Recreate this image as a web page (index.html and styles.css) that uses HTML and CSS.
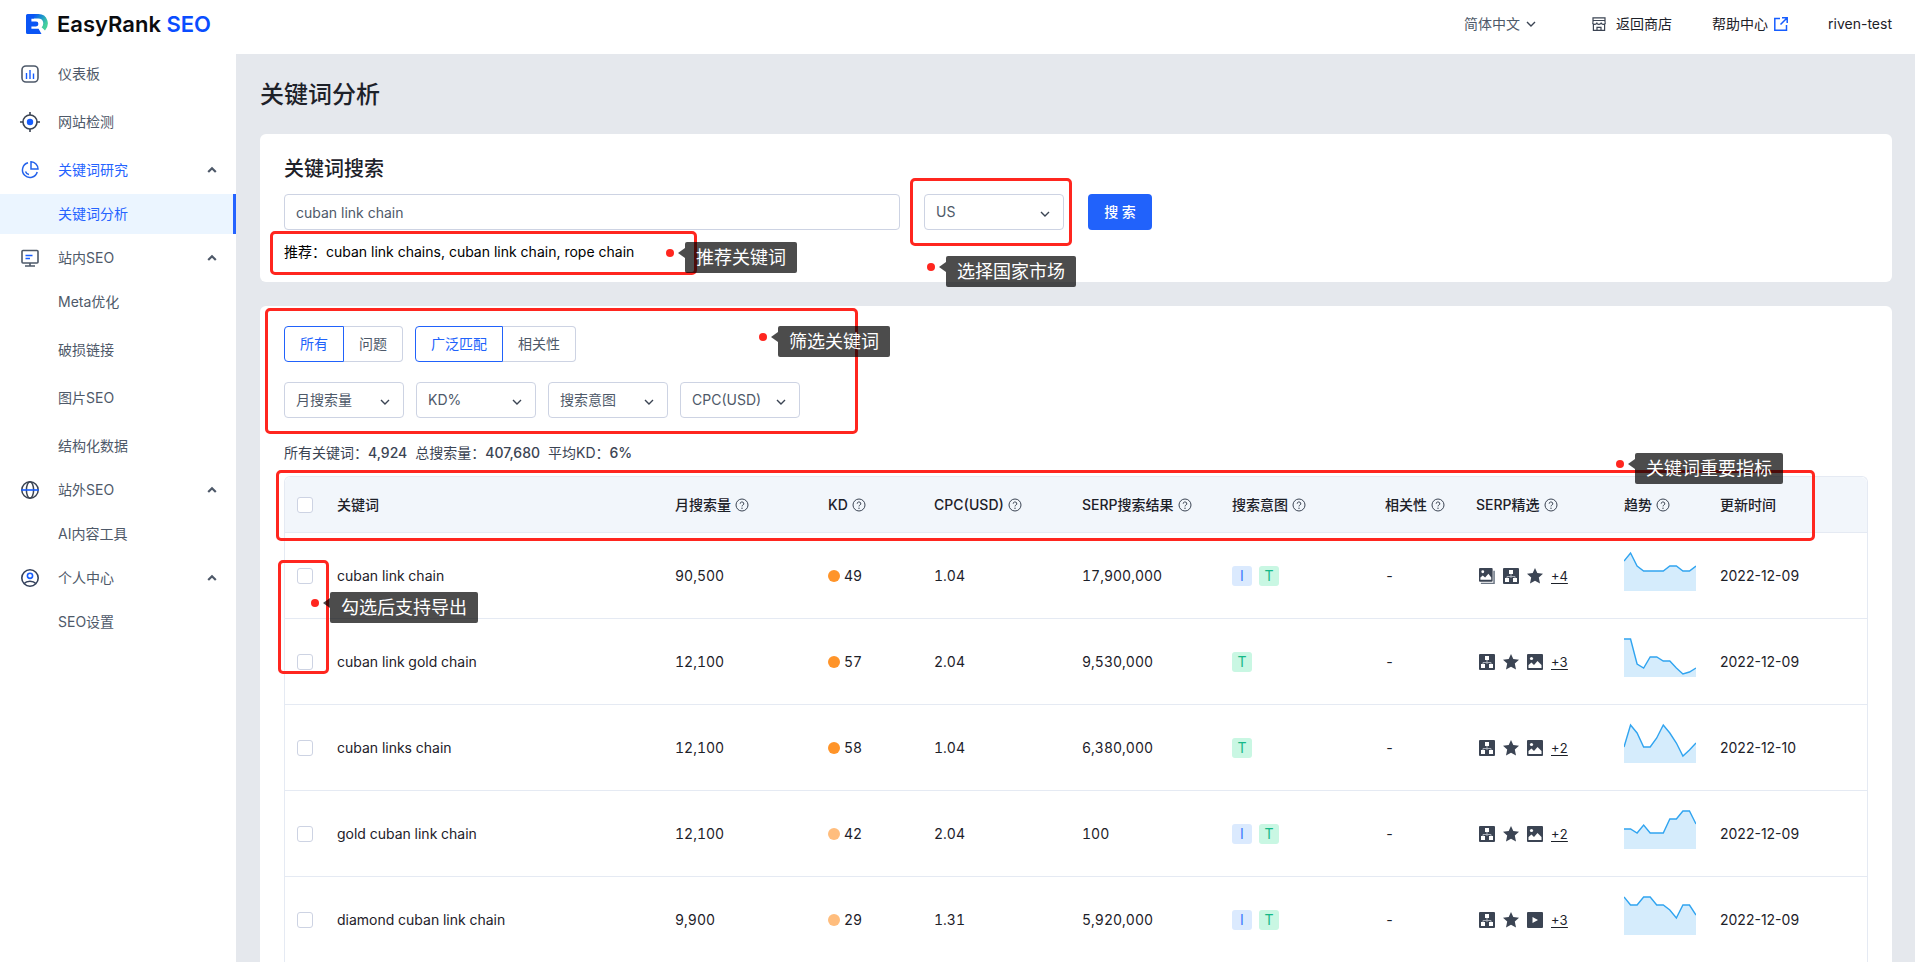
FILE: index.html
```html
<!DOCTYPE html>
<html lang="zh-CN">
<head>
<meta charset="utf-8">
<meta name="viewport" content="width=device-width, initial-scale=1">
<title>关键词分析 - EasyRank SEO</title>
<link rel="stylesheet" href="styles.css">
</head>
<body>
<svg class="sprite" aria-hidden="true">
  <symbol id="down" viewBox="0 0 10 10"><path d="M1 3l4 4 4-4" fill="none" stroke="currentColor" stroke-width="1.4"/></symbol>
  <symbol id="up" viewBox="0 0 10 10"><path d="M1.2 7L5 3.2 8.800 7" fill="none" stroke="currentColor" stroke-width="2.200"/></symbol>
  <symbol id="help" viewBox="0 0 14 14"><g fill="none" stroke="currentColor"><circle cx="7" cy="7" r="6"/><path d="M5.200 5.700a1.800 1.700 0 1 1 2.700 1.400c-.6.4-.9.6-.9 1.300"/></g><circle cx="7" cy="10.200" r=".7" fill="currentColor"/></symbol>
  <symbol id="sitemap" viewBox="0 0 16 16"><rect width="16" height="16" rx="1" fill="#3b4453"/><path d="M6 2h4v4H6zM2 10h4v4H2zM10 10h4v4h-4z" fill="#fff"/><path d="M8 6v2.500M4 10V8.500h8V10M8 8v2" fill="none" stroke="#a9aeb8" stroke-width="1"/></symbol>
  <symbol id="star" viewBox="0 0 16 16"><path d="M8 0l2.300 5.100 5.700.6-4.200 3.800 1.200 5.900L8 12.700l-5 2.700 1.200-5.900L0 5.700l5.700-.6z" fill="#3b4453"/></symbol>
  <symbol id="image" viewBox="0 0 16 16"><rect width="16" height="16" rx="1" fill="#3b4453"/><circle cx="4.500" cy="4.500" r="1.600" fill="#fff"/><path d="M1.500 14v-3l3-2.500 2.500 2.500 3.500-4 4 4v3z" fill="#fff"/></symbol>
  <symbol id="images" viewBox="0 0 17 17"><path d="M2 16.500h14V3" fill="none" stroke="#6b7583" stroke-width="1.600"/><rect width="14.500" height="14.500" rx="1" fill="#3b4453"/><circle cx="4" cy="4" r="1.500" fill="#fff"/><path d="M1.500 12.500V10l2.500-2 2.500 2L10 6l3 4v2.500z" fill="#fff"/></symbol>
  <symbol id="video" viewBox="0 0 16 16"><rect width="16" height="16" rx="1" fill="#3b4453"/><path d="M5.500 5l5.500 3-5.500 3z" fill="#fff"/></symbol>
</svg>
<div class="app">
  <aside class="sidebar">
    <div class="brand">
      <svg class="brand-mark" viewBox="0 0 22 20" aria-hidden="true">
        <defs><linearGradient id="brand-arc" gradientUnits="userSpaceOnUse" x1="8" y1="1" x2="20" y2="10"><stop offset="0" stop-color="#0a55f5"/><stop offset=".45" stop-color="#1a8fd0"/><stop offset="1" stop-color="#45d09c"/></linearGradient></defs>
        <path d="M4 2.300h8.500c7 0 9 8 4.800 12.600" fill="none" stroke="url(#brand-arc)" stroke-width="4.600"/>
        <path d="M1.500 0H8v4.600H5.400v3H10a2.400 2.400 0 0 1 0 4.800H5.400v2.400h7.200L15.500 20h-14Q0 20 0 18.500v-17Q0 0 1.500 0z" fill="#0a55f5"/>
      </svg>
      <span class="brand-name">EasyRank <span class="brand-accent">SEO</span></span>
    </div>
    <nav class="menu">
      <a class="menu-item" href="#">
        <svg class="menu-icon" viewBox="0 0 20 20"><rect x="2" y="2" width="16" height="16" rx="4" fill="none" stroke="#4e5969" stroke-width="1.600"/><path d="M6.500 9v6M10 6v9M13.500 9.500V15" stroke="#165dff" stroke-width="1.400"/></svg>
        <span>仪表板</span></a>
      <a class="menu-item" href="#">
        <svg class="menu-icon" viewBox="0 0 20 20"><g fill="none" stroke="#3b4453" stroke-width="1.600"><circle cx="10" cy="10" r="7"/><path d="M10 0v3M10 17v3M0 10h3M17 10h3"/></g><circle cx="10" cy="10" r="3.200" fill="#165dff"/></svg>
        <span>网站检测</span></a>
      <a class="menu-item menu-item-open" href="#">
        <svg class="menu-icon" viewBox="0 0 20 20"><g fill="none" stroke="#2563eb" stroke-width="1.500"><path d="M8 2.800A7.500 7.500 0 1 0 17.200 12"/><path d="M11 1.800V9h7A7.200 7.200 0 0 0 11 1.800z"/><path d="M5.500 11.500A4.500 4.500 0 0 0 9 14.500"/></g></svg>
        <span>关键词研究</span><svg class="menu-caret"><use href="#up"/></svg></a>
      <div class="submenu"><a class="submenu-item submenu-item-active" href="#">关键词分析</a></div>
      <a class="menu-item" href="#">
        <svg class="menu-icon" viewBox="0 0 20 20"><g fill="none" stroke="#4e5969" stroke-width="1.600"><rect x="2" y="2.500" width="16" height="12.500" rx="1"/><path d="M10 15v3M5 18h10"/></g><path d="M5.500 7.500h7M5.500 10.500h4.500" stroke="#165dff" stroke-width="1.400"/></svg>
        <span>站内SEO</span><svg class="menu-caret"><use href="#up"/></svg></a>
      <div class="submenu">
        <a class="submenu-item" href="#">Meta优化</a>
        <a class="submenu-item" href="#">破损链接</a>
        <a class="submenu-item" href="#">图片SEO</a>
        <a class="submenu-item" href="#">结构化数据</a>
      </div>
      <a class="menu-item" href="#">
        <svg class="menu-icon" viewBox="0 0 20 20"><g fill="none" stroke="#3b4453" stroke-width="1.500"><circle cx="10" cy="10" r="8.200"/><ellipse cx="10" cy="10" rx="3.600" ry="8.200"/></g><path d="M1.200 10h17.600" stroke="#165dff" stroke-width="1.600"/></svg>
        <span>站外SEO</span><svg class="menu-caret"><use href="#up"/></svg></a>
      <div class="submenu"><a class="submenu-item" href="#">AI内容工具</a></div>
      <a class="menu-item" href="#">
        <svg class="menu-icon" viewBox="0 0 20 20"><g fill="none" stroke="#34415c" stroke-width="1.600"><circle cx="10" cy="10" r="8.200"/><path d="M4.200 15.500c2.500-3 9-3 11.600 0"/></g><circle cx="10" cy="7.800" r="2.600" fill="none" stroke="#165dff" stroke-width="1.600"/></svg>
        <span>个人中心</span><svg class="menu-caret"><use href="#up"/></svg></a>
      <div class="submenu"><a class="submenu-item" href="#">SEO设置</a></div>
    </nav>
  </aside>

  <div class="page">
    <header class="topbar">
      <button class="language" type="button">简体中文 <svg class="chevron"><use href="#down"/></svg></button>
      <a class="top-link top-link-shop" href="#"><svg class="top-icon" viewBox="0 0 14 14"><g fill="none" stroke="#3b4453" stroke-width="1.200"><path d="M1 5.500V.8h12v4.700M1 3.500h12M1.400 7v6.300h11.200V7"/><path d="M.6 5.500c0 2.400 4.200 2.400 4.200 0 0 2.400 4.400 2.400 4.400 0 0 2.400 4.200 2.400 4.200 0M5 13v-2.700h4V13"/></g></svg>返回商店</a>
      <a class="top-link top-link-help" href="#">帮助中心<svg class="top-icon" viewBox="0 0 14 14"><path d="M6 1.500H.8v11.700h11.700V8M8 .8h5.200V6M13 1L6.500 7.500" fill="none" stroke="#165dff" stroke-width="1.500"/></svg></a>
      <a class="top-link" href="#">riven-test</a>
    </header>

    <main class="content">
      <h1 class="page-title">关键词分析</h1>

      <section class="card">
        <h2 class="card-title">关键词搜索</h2>
        <form class="search-form">
          <input class="field search-input" type="text" value="cuban link chain" aria-label="关键词">
          <span class="select-box select-country"><select class="field" aria-label="国家市场"><option>US</option></select><svg class="chevron select-arrow"><use href="#down"/></svg></span>
          <button class="primary-button" type="button">搜 索</button>
        </form>
        <p class="recommend">推荐：cuban link chains, cuban link chain, rope chain</p>
      </section>

      <section class="card card-results">
        <div class="tabs">
          <div class="tab-group"><button class="tab tab-active" type="button">所有</button><button class="tab" type="button">问题</button></div>
          <div class="tab-group"><button class="tab tab-active" type="button">广泛匹配</button><button class="tab" type="button">相关性</button></div>
        </div>
        <div class="filters">
          <span class="select-box"><select class="field" aria-label="月搜索量"><option>月搜索量</option></select><svg class="chevron select-arrow"><use href="#down"/></svg></span>
          <span class="select-box"><select class="field" aria-label="KD%"><option>KD%</option></select><svg class="chevron select-arrow"><use href="#down"/></svg></span>
          <span class="select-box"><select class="field" aria-label="搜索意图"><option>搜索意图</option></select><svg class="chevron select-arrow"><use href="#down"/></svg></span>
          <span class="select-box"><select class="field" aria-label="CPC(USD)"><option>CPC(USD)</option></select><svg class="chevron select-arrow"><use href="#down"/></svg></span>
        </div>
        <p class="stats"><span>所有关键词：<span class="stat-value">4,924</span></span><span>总搜索量：<span class="stat-value">407,680</span></span><span>平均KD：<span class="stat-value">6%</span></span></p>

        <table class="keywords">
          <colgroup>
            <col class="col-check"><col><col class="col-volume"><col class="col-kd"><col class="col-cpc"><col class="col-serp"><col class="col-intent"><col class="col-related"><col class="col-features"><col class="col-trend"><col class="col-date">
          </colgroup>
          <thead>
            <tr>
              <th><input class="check" type="checkbox" aria-label="全选"></th>
              <th>关键词</th>
              <th>月搜索量<svg class="help"><use href="#help"/></svg></th>
              <th>KD<svg class="help"><use href="#help"/></svg></th>
              <th>CPC(USD)<svg class="help"><use href="#help"/></svg></th>
              <th>SERP搜索结果<svg class="help"><use href="#help"/></svg></th>
              <th>搜索意图<svg class="help"><use href="#help"/></svg></th>
              <th>相关性<svg class="help"><use href="#help"/></svg></th>
              <th>SERP精选<svg class="help"><use href="#help"/></svg></th>
              <th>趋势<svg class="help"><use href="#help"/></svg></th>
              <th>更新时间</th>
            </tr>
          </thead>
          <tbody>
            <tr>
              <td><input class="check" type="checkbox" aria-label="cuban link chain"></td>
              <td>cuban link chain</td><td>90,500</td>
              <td><span class="kd"><i class="dot"></i>49</span></td>
              <td>1.04</td><td>17,900,000</td>
              <td><span class="tags"><span class="tag tag-i">I</span><span class="tag tag-t">T</span></span></td>
              <td>-</td>
              <td><span class="features"><svg><use href="#images"/></svg><svg><use href="#sitemap"/></svg><svg><use href="#star"/></svg><a href="#">+4</a></span></td>
              <td><svg class="trend" viewBox="0 0 11 40" preserveAspectRatio="none"><path class="trend-area" d="M0 10L1 2 2 15 3 20H6L7 15H8L9 20H10L11 15V40H0z"/><path class="trend-line" d="M0 10L1 2 2 15 3 20H6L7 15H8L9 20H10L11 15"/></svg></td>
              <td class="date">2022-12-09</td>
            </tr>
            <tr>
              <td><input class="check" type="checkbox" aria-label="cuban link gold chain"></td>
              <td>cuban link gold chain</td><td>12,100</td>
              <td><span class="kd"><i class="dot"></i>57</span></td>
              <td>2.04</td><td>9,530,000</td>
              <td><span class="tags"><span class="tag tag-t">T</span></span></td>
              <td>-</td>
              <td><span class="features"><svg><use href="#sitemap"/></svg><svg><use href="#star"/></svg><svg><use href="#image"/></svg><a href="#">+3</a></span></td>
              <td><svg class="trend" viewBox="0 0 11 40" preserveAspectRatio="none"><path class="trend-area" d="M0 2H1L2 27 3 31 4 20H5L6 24H7L8 31 9 37 10 35 11 31V40H0z"/><path class="trend-line" d="M0 2H1L2 27 3 31 4 20H5L6 24H7L8 31 9 37 10 35 11 31"/></svg></td>
              <td class="date">2022-12-09</td>
            </tr>
            <tr>
              <td><input class="check" type="checkbox" aria-label="cuban links chain"></td>
              <td>cuban links chain</td><td>12,100</td>
              <td><span class="kd"><i class="dot"></i>58</span></td>
              <td>1.04</td><td>6,380,000</td>
              <td><span class="tags"><span class="tag tag-t">T</span></span></td>
              <td>-</td>
              <td><span class="features"><svg><use href="#sitemap"/></svg><svg><use href="#star"/></svg><svg><use href="#image"/></svg><a href="#">+2</a></span></td>
              <td><svg class="trend" viewBox="0 0 11 40" preserveAspectRatio="none"><path class="trend-area" d="M0 24L1 2 2 10 3 24H4L5 15 6 2 7 10 8 20 9 33 10 27 11 20V40H0z"/><path class="trend-line" d="M0 24L1 2 2 10 3 24H4L5 15 6 2 7 10 8 20 9 33 10 27 11 20"/></svg></td>
              <td class="date">2022-12-10</td>
            </tr>
            <tr>
              <td><input class="check" type="checkbox" aria-label="gold cuban link chain"></td>
              <td>gold cuban link chain</td><td>12,100</td>
              <td><span class="kd"><i class="dot dot-light"></i>42</span></td>
              <td>2.04</td><td>100</td>
              <td><span class="tags"><span class="tag tag-i">I</span><span class="tag tag-t">T</span></span></td>
              <td>-</td>
              <td><span class="features"><svg><use href="#sitemap"/></svg><svg><use href="#star"/></svg><svg><use href="#image"/></svg><a href="#">+2</a></span></td>
              <td><svg class="trend" viewBox="0 0 11 40" preserveAspectRatio="none"><path class="trend-area" d="M0 20H1L2 24 3 16 4 24H6L7 10H8L9 2H10L11 15V40H0z"/><path class="trend-line" d="M0 20H1L2 24 3 16 4 24H6L7 10H8L9 2H10L11 15"/></svg></td>
              <td class="date">2022-12-09</td>
            </tr>
            <tr>
              <td><input class="check" type="checkbox" aria-label="diamond cuban link chain"></td>
              <td>diamond cuban link chain</td><td>9,900</td>
              <td><span class="kd"><i class="dot dot-light"></i>29</span></td>
              <td>1.31</td><td>5,920,000</td>
              <td><span class="tags"><span class="tag tag-i">I</span><span class="tag tag-t">T</span></span></td>
              <td>-</td>
              <td><span class="features"><svg><use href="#sitemap"/></svg><svg><use href="#star"/></svg><svg><use href="#video"/></svg><a href="#">+3</a></span></td>
              <td><svg class="trend" viewBox="0 0 11 40" preserveAspectRatio="none"><path class="trend-area" d="M0 2L1 10H2L3 2H4L5 10H6L7 15 8 23 9 10H10L11 20V40H0z"/><path class="trend-line" d="M0 2L1 10H2L3 2H4L5 10H6L7 15 8 23 9 10H10L11 20"/></svg></td>
              <td class="date">2022-12-09</td>
            </tr>
          </tbody>
        </table>
      </section>
    </main>
  </div>

  <div class="mark mark-recommend"></div>
  <div class="mark mark-country"></div>
  <div class="mark mark-filter"></div>
  <div class="mark mark-metrics"></div>
  <div class="mark mark-export"></div>
  <div class="note note-recommend">推荐关键词</div>
  <div class="note note-country">选择国家市场</div>
  <div class="note note-filter">筛选关键词</div>
  <div class="note note-metrics">关键词重要指标</div>
  <div class="note note-export">勾选后支持导出</div>
</div>
</body>
</html>
```
FILE: styles.css
```css
* { box-sizing: border-box; }

body {
  margin: 0;
  font-family: Inter, "Noto Sans CJK SC", sans-serif;
  font-size: 14px;
  line-height: 22px;
  color: #1d2129;
  background: #e5e8ed;
}

h1, h2, p { margin: 0; }
a { color: inherit; text-decoration: none; }
button, input, select { font: inherit; color: inherit; }
svg { display: block; flex: none; }

.sprite { position: absolute; width: 0; height: 0; }

.app {
  position: relative;
  display: grid;
  grid-template-columns: 236px minmax(0, 1fr);
  height: 100vh;
  overflow: hidden;
}

/* Sidebar */
.sidebar { background: #fff; }

.brand {
  display: flex;
  align-items: center;
  gap: 9px;
  height: 50px;
  padding: 0 0 2px 26px;
}
.brand-mark { width: 22px; height: 20px; }
.brand-name { font-size: 22px; font-weight: 600; color: #0b0c0f; white-space: nowrap; }
.brand-accent { color: #0a4dff; }

.menu { display: flex; flex-direction: column; color: #4e5969; }
.menu-item {
  display: flex;
  align-items: center;
  gap: 18px;
  height: 48px;
  padding: 0 19px 0 20px;
}
.menu-item-open { color: #2563ff; }
.menu-icon { width: 20px; height: 20px; }
.menu-caret { width: 10px; height: 10px; margin-left: auto; color: #4e5969; }

.submenu { display: flex; flex-direction: column; gap: 8px; }
.submenu-item { padding: 9px 0 9px 58px; }
.submenu-item-active {
  color: #2563ff;
  background: #ebf5ff;
  border-right: 3px solid #2563ff;
}

/* Top bar */
.page { display: flex; flex-direction: column; min-width: 0; min-height: 0; }
.topbar {
  display: flex;
  flex: none;
  align-items: center;
  justify-content: flex-end;
  gap: 40px;
  height: 54px;
  padding: 0 23px 6px;
  background: #fff;
}
.language {
  display: flex;
  align-items: center;
  gap: 6px;
  margin-right: 16px;
  padding: 0;
  border: 0;
  background: none;
  color: #4e5969;
}
.chevron { width: 10px; height: 10px; color: #3b4453; }
.top-link { display: flex; align-items: center; }
.top-link-shop { gap: 10px; }
.top-link-help { gap: 6px; }
.top-icon { width: 14px; height: 14px; }

/* Content */
.content {
  display: flex;
  flex: 1;
  flex-direction: column;
  gap: 24px;
  min-height: 0;
  padding: 26px 23px 0 24px;
  overflow: hidden;
}
.page-title { font-size: 24px; line-height: 30px; font-weight: 500; }

.card {
  flex: none;
  padding: 20px 24px;
  border-radius: 6px;
  background: #fff;
}
.card-title { margin-bottom: 10px; font-size: 20px; line-height: 30px; font-weight: 500; }

.field {
  width: 100%;
  height: 36px;
  padding: 0 11px;
  border: 1px solid #cdd3e3;
  border-radius: 4px;
  background: #fff;
  color: #4e5969;
  appearance: none;
}
.search-form { display: flex; gap: 24px; }
.search-input { width: 616px; }
.select-box { position: relative; width: 120px; }
.select-country { width: 140px; }
.select-arrow { position: absolute; right: 14px; top: 15px; pointer-events: none; }
.primary-button {
  width: 64px;
  height: 36px;
  padding: 0;
  border: 0;
  border-radius: 4px;
  background: #2162fb;
  color: #fff;
  font-weight: 500;
}
.recommend { margin-top: 12px; line-height: 20px; color: #000; }

.tabs, .filters { display: flex; gap: 12px; margin-bottom: 20px; }
.filters { margin-bottom: 24px; }
.tab-group { display: flex; }
.tab {
  height: 36px;
  padding: 0 15px;
  border: 1px solid #cdd3e3;
  border-left-width: 0;
  border-radius: 0 4px 4px 0;
  background: #fff;
  color: #4e5969;
}
.tab-active {
  border: 1px solid #2162fb;
  border-radius: 4px 0 0 4px;
  color: #2162fb;
}
.stats { display: flex; gap: 8px; margin-bottom: 12px; color: #3b4453; }
.stat-value { font-weight: 500; }

/* Keyword table */
.keywords {
  width: 100%;
  table-layout: fixed;
  border: 1px solid #e5eaf3;
  border-bottom: 0;
  border-radius: 6px 6px 0 0;
  border-spacing: 0;
  font-variant-numeric: tabular-nums;
}
.col-check { width: 40px; }
.col-volume { width: 153px; }
.col-kd { width: 106px; }
.col-cpc { width: 148px; }
.col-serp { width: 150px; }
.col-intent { width: 153px; }
.col-related { width: 91px; }
.col-features { width: 148px; }
.col-trend { width: 96px; }
.col-date { width: 159px; }

.keywords th, .keywords td {
  padding: 0 12px;
  border-bottom: 1px solid #e5eaf3;
  text-align: left;
  white-space: nowrap;
}
.keywords th { height: 56px; background: #f2f6fb; font-weight: 500; }
.keywords th:first-child { border-top-left-radius: 6px; }
.keywords th:last-child { border-top-right-radius: 6px; }
.keywords td { height: 86px; }
.date { font-variant-numeric: normal; }

.check {
  display: block;
  width: 16px;
  height: 16px;
  margin: 0;
  border: 1px solid #cdd3e3;
  border-radius: 3px;
  background: #fff;
  appearance: none;
}
.check:checked { background: #2162fb; border-color: #2162fb; }
.help { display: inline-block; width: 14px; height: 14px; margin-left: 4px; vertical-align: -2px; color: #3b4453; }

.kd { display: flex; align-items: center; gap: 4px; }
.dot { width: 12px; height: 12px; border-radius: 50%; background: #ff9429; }
.dot-light { background: #ffbd7d; }

.tags { display: flex; gap: 7px; }
.tag { width: 20px; border-radius: 3px; line-height: 20px; text-align: center; }
.tag-i { background: #dbeafe; color: #3b7bff; }
.tag-t { background: #c9f7e3; color: #16b887; }

.features { display: flex; align-items: center; gap: 8px; padding-left: 3px; }
.features svg { width: 16px; height: 16px; }
.features a { font-size: 13px; text-decoration: underline; text-underline-offset: 2px; }

.trend { width: 72px; height: 40px; margin-bottom: 10px; }
.trend-area { fill: #d5ecfc; }
.trend-line { fill: none; stroke: #30a4f0; stroke-width: 1.4; vector-effect: non-scaling-stroke; }

/* Guide marks laid over the page */
.mark { position: absolute; border: 3px solid #ff261f; border-radius: 5px; pointer-events: none; }
.mark-recommend { left: 270px; top: 231px; width: 427px; height: 44px; }
.mark-country { left: 910px; top: 178px; width: 162px; height: 68px; }
.mark-filter { left: 265px; top: 308px; width: 593px; height: 126px; }
.mark-metrics { left: 276px; top: 470px; width: 1539px; height: 71px; }
.mark-export { left: 278px; top: 560px; width: 51px; height: 114px; }

.note {
  position: absolute;
  height: 31px;
  padding: 0 11px;
  border-radius: 2px;
  background: rgba(0, 0, 0, 0.7);
  color: #fff;
  font-size: 18px;
  line-height: 31px;
  white-space: nowrap;
}
.note::before {
  content: "";
  position: absolute;
  left: -19px;
  top: 7px;
  width: 8px;
  height: 8px;
  border-radius: 50%;
  background: #ff261f;
}
.note::after {
  content: "";
  position: absolute;
  left: -7px;
  top: 6px;
  border: solid transparent;
  border-width: 5px 7px 5px 0;
  border-right-color: rgba(0, 0, 0, 0.7);
}
.note-recommend { left: 685px; top: 242px; }
.note-country { left: 946px; top: 256px; }
.note-filter { left: 778px; top: 326px; }
.note-metrics { left: 1635px; top: 453px; }
.note-export { left: 330px; top: 592px; }
```
